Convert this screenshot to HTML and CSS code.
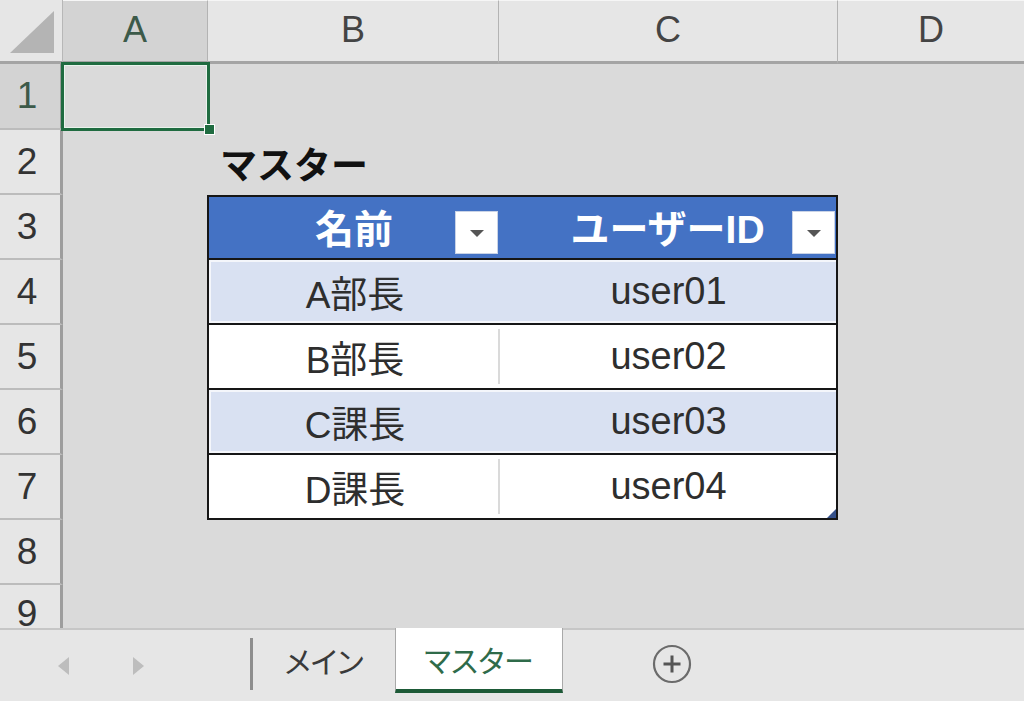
FILE: index.html
```html
<!DOCTYPE html>
<html lang="ja">
<head>
<meta charset="utf-8">
<title>マスター</title>
<link rel="stylesheet" href="styles.css">
</head>
<body>
<div class="sheet">
  <div class="corner"><span class="corner-tri"></span></div>
  <div class="colh sel">A</div>
  <div class="colh">B</div>
  <div class="colh">C</div>
  <div class="colh last">D</div>

  <div class="rowh sel r1">1</div>
  <div class="rowh r2">2</div>
  <div class="rowh r3">3</div>
  <div class="rowh r4">4</div>
  <div class="rowh r5">5</div>
  <div class="rowh r6">6</div>
  <div class="rowh r7">7</div>
  <div class="rowh r8">8</div>
  <div class="rowh r9">9</div>

  <div class="selection"><span class="handle"></span></div>

  <div class="title">マスター</div>

  <div class="tbl">
    <div class="th">名前<span class="filter"><span class="arrow"></span></span></div>
    <div class="th">ユーザーID<span class="filter"><span class="arrow"></span></span></div>
    <div class="td band c1">A部長</div><div class="td band c2">user01</div>
    <div class="td c1">B部長</div><div class="td c2 div">user02</div>
    <div class="td band c1">C課長</div><div class="td band c2">user03</div>
    <div class="td c1">D課長</div><div class="td c2 div">user04</div>
    <svg class="resize" width="9" height="9" viewBox="0 0 9 9"><path d="M9 0 L9 9 L0 9 Z" fill="#34508a"/></svg>
  </div>
</div>

<div class="tabbar">
  <div class="nav">
    <span class="tri-left"></span>
    <span class="tri-right"></span>
  </div>
  <span class="vsep"></span>
  <div class="tab">メイン</div>
  <div class="tab active">マスター</div>
  <div class="add">
    <svg width="40" height="40" viewBox="0 0 40 40">
      <circle cx="20" cy="20" r="18" fill="none" stroke="#6b6b6b" stroke-width="2.2"/>
      <path d="M20 11.5 V28.5 M11.5 20 H28.5" stroke="#555" stroke-width="3" fill="none"/>
    </svg>
  </div>
</div>
</body>
</html>
```

FILE: styles.css
```css
html, body {
  margin: 0;
  padding: 0;
}
body {
  width: 1024px;
  height: 701px;
  overflow: hidden;
  background: #dadada;
  font-family: "Liberation Sans", "Noto Sans CJK JP", sans-serif;
  color: #333;
}

.sheet {
  display: grid;
  grid-template-columns: 63px 145px 291px 339px 186px;
  grid-template-rows: 64px 66px repeat(7, 65px) 43px;
  height: 628px;
  overflow: hidden;
  background: #dadada;
}

.corner {
  grid-row: 1;
  grid-column: 1;
  background: #e6e6e6;
  border-right: 1px solid #b7b7b7;
  border-bottom: 3px solid #a4a4a4;
  position: relative;
}
.corner-tri {
  position: absolute;
  right: 8px;
  bottom: 8px;
  width: 0;
  height: 0;
  border-left: 44px solid transparent;
  border-bottom: 42px solid #b4b4b4;
}

.colh {
  grid-row: 1;
  background: #e6e6e6;
  border-top: 1px solid #f6f6f6;
  border-right: 1px solid #b3b3b3;
  border-bottom: 3px solid #a4a4a4;
  display: flex;
  align-items: center;
  justify-content: center;
  font-size: 36px;
  color: #444;
  padding-bottom: 2px;
}
.colh.last { border-right: none; }
.colh.sel {
  background: #d3d3d3;
  color: #3c5a49;
}

.rowh {
  grid-column: 1;
  background: #e6e6e6;
  border-right: 3px solid #9d9d9d;
  border-bottom: 2px solid #bcbcbc;
  display: flex;
  align-items: center;
  justify-content: center;
  font-size: 37px;
  color: #333;
  padding-right: 6px;
}
.rowh.sel { background: #d3d3d3; color: #3c5a49; }
.r1 { grid-row: 2; }
.r2 { grid-row: 3; }
.r3 { grid-row: 4; }
.r4 { grid-row: 5; }
.r5 { grid-row: 6; }
.r6 { grid-row: 7; }
.r7 { grid-row: 8; }
.r8 { grid-row: 9; }
.r9 { grid-row: 10; align-items: flex-start; padding-top: 8px; border-bottom: none; }

.selection {
  grid-row: 2;
  grid-column: 2;
  margin: -2px -2px -1px -2px;
  border: 3px solid #1f6b40;
  box-shadow: inset 0 0 0 1px #e9f3ec;
  position: relative;
}
.handle {
  position: absolute;
  right: -8px;
  bottom: -7px;
  width: 9px;
  height: 9px;
  background: #1f6b40;
  border: 1px solid #ffffff;
}

.title {
  grid-row: 3;
  grid-column: 3 / 5;
  align-self: center;
  padding-left: 12px;
  font-family: "Noto Sans CJK JP", sans-serif;
  font-weight: 700;
  font-size: 37px;
  color: #111;
  line-height: 1;
  padding-top: 2px;
}

.tbl {
  grid-row: 4 / 9;
  grid-column: 3 / 5;
  margin-left: -1px;
  border: 2px solid #161616;
  background: #ffffff;
  display: grid;
  grid-template-columns: 290px 1fr;
  grid-template-rows: 61px repeat(4, 65px);
  position: relative;
}

.th {
  background: #4472c4;
  color: #ffffff;
  font-family: "Liberation Sans", "Noto Sans CJK JP", sans-serif;
  font-weight: 700;
  font-size: 39px;
  display: flex;
  align-items: center;
  justify-content: center;
  position: relative;
  padding-bottom: 4px;
}
.filter {
  position: absolute;
  right: 2px;
  top: 15px;
  width: 41px;
  height: 41px;
  background: #ffffff;
  box-shadow: 0 0 0 1px #c9d3e6;
  display: flex;
  align-items: center;
  justify-content: center;
}
.arrow {
  width: 0;
  height: 0;
  border-left: 7px solid transparent;
  border-right: 7px solid transparent;
  border-top: 7px solid #555;
  margin-top: 2px;
}

.td {
  border-top: 2px solid #161616;
  display: flex;
  align-items: center;
  justify-content: center;
  font-size: 37px;
  color: #2e2e2e;
  position: relative;
  padding-left: 2px;
}
.td.c2 { font-size: 38px; }
.td.band {
  background: #d9e1f2;
  box-shadow: inset 0 2px 0 #f4f6fb, inset 0 -2px 0 #f4f6fb;
}
.td.c1.band {
  box-shadow: inset 0 2px 0 #f4f6fb, inset 0 -2px 0 #f4f6fb, inset 2px 0 0 #f4f6fb;
}
.td.div::before {
  content: "";
  position: absolute;
  left: -1px;
  top: 4px;
  bottom: 4px;
  width: 2px;
  background: #dadada;
}

.resize {
  position: absolute;
  right: 0;
  bottom: 0;
}

.tabbar {
  height: 73px;
  box-sizing: border-box;
  background: #e6e6e6;
  border-top: 2px solid #c6c6c6;
  display: flex;
  align-items: flex-start;
  font-family: "Noto Sans CJK JP", sans-serif;
}
.nav {
  width: 250px;
  height: 71px;
  display: flex;
  align-items: center;
  flex-shrink: 0;
}
.tri-left {
  margin-left: 58px;
  width: 0;
  height: 0;
  border-top: 9px solid transparent;
  border-bottom: 9px solid transparent;
  border-right: 11px solid #bdbdbd;
}
.tri-right {
  margin-left: 64px;
  width: 0;
  height: 0;
  border-top: 9px solid transparent;
  border-bottom: 9px solid transparent;
  border-left: 11px solid #bdbdbd;
}
.vsep {
  width: 3px;
  height: 52px;
  margin-top: 8px;
  background: #8e8e8e;
  flex-shrink: 0;
}
.tab {
  width: 142px;
  height: 60px;
  display: flex;
  align-items: center;
  justify-content: center;
  font-size: 30px;
  font-feature-settings: "palt";
  color: #3a3a3a;
  padding-bottom: 2px;
  flex-shrink: 0;
}
.tab.active {
  width: 166px;
  margin-top: -2px;
  height: 61px;
  background: #ffffff;
  border-left: 1px solid #a9a9a9;
  border-right: 1px solid #a9a9a9;
  border-bottom: 4px solid #1d5a37;
  color: #2f6b4a;
  padding-bottom: 0;
}
.add {
  margin-left: 89px;
  margin-top: 14px;
  width: 40px;
  height: 40px;
  flex-shrink: 0;
}
.add svg { display: block; }
```
